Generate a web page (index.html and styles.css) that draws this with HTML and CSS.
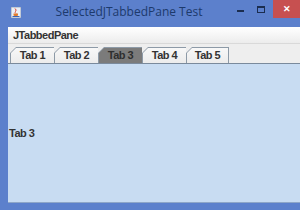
FILE: index.html
```html
<!DOCTYPE html>
<html lang="en">
<head>
    <meta charset="UTF-8">
    <title>SelectedJTabbedPane Test</title>
    <link rel="stylesheet" href="styles.css">
</head>
<body>
    <!-- 窗口外框 -->
    <div class="window">
        <!-- 标题栏 -->
        <div class="titlebar">
            <svg class="appicon" width="10" height="11" viewBox="0 0 10 11">
                <rect x="0" y="0" width="10" height="11" fill="#e9eef6" stroke="#9aa6b8" stroke-width="1"/>
                <path d="M4 1.5 Q6 3 4.5 4.5 Q3.5 5.5 5 6.5" fill="none" stroke="#e0442a" stroke-width="1"/>
                <path d="M2.5 6.5 H7 V8.5 Q4.8 10 2.5 8.5 Z" fill="#e07b2a"/>
                <path d="M1.5 9.5 H8.5" stroke="#3b63b5" stroke-width="1"/>
            </svg>
            <div class="title">SelectedJTabbedPane Test</div>
            <div class="controls">
                <span class="min"></span>
                <span class="max"></span>
                <span class="close">✕</span>
            </div>
        </div>
        <!-- 窗口内容 -->
        <div class="client">
            <div class="menubar">JTabbedPane</div>
            <ul class="tabs">
                <li class="tab"><span>Tab 1</span></li>
                <li class="tab"><span>Tab 2</span></li>
                <li class="tab active"><span>Tab 3</span></li>
                <li class="tab"><span>Tab 4</span></li>
                <li class="tab last"><span>Tab 5</span></li>
            </ul>
            <div class="panel">Tab 3</div>
        </div>
        <div class="bottom"></div>
    </div>
</body>
</html>
```

FILE: styles.css
```css
/* 整体 */
body{
    margin: 0;
    font-family: "Liberation Sans", Arial, sans-serif;
}
.window{
    width: 300px;
    height: 210px;
    background-color: #5c80cc;
    display: flex;
    flex-direction: column;
    overflow: hidden;
}
/* 标题栏 */
.titlebar{
    height: 27px;
    display: flex;
    align-items: flex-start;
}
.appicon{
    margin: 7px 0 0 11px;
}
.title{
    flex: 1;
    text-align: center;
    font-family: "Open Sans", "Noto Sans", sans-serif;
    font-size: 12px;
    color: #1d3a6c;
    line-height: 24px;
}
.controls{
    display: flex;
    align-items: flex-start;
    height: 18px;
}
.min{
    width: 7px;
    height: 2px;
    background-color: #1b2d4f;
    margin: 10px 13px 0 0;
}
.max{
    width: 6px;
    height: 4px;
    border: 1px solid #1b2d4f;
    border-top-width: 2px;
    margin: 6px 8px 0 0;
}
.close{
    width: 27px;
    height: 18px;
    background-color: #c75050;
    color: white;
    font-size: 9px;
    font-weight: bold;
    text-align: center;
    line-height: 18px;
}
/* 内容区 */
.client{
    flex: 1;
    margin-left: 8px;
    display: flex;
    flex-direction: column;
    background-color: #eeeeee;
}
.menubar{
    height: 16px;
    padding-left: 5px;
    font-size: 11px;
    font-weight: bold;
    letter-spacing: -0.5px;
    line-height: 16px;
    color: #333333;
    background: linear-gradient(#ffffff, #ececec);
    border-bottom: 1px solid #d9d9d9;
}
.tabs{
    list-style: none;
    margin: 0;
    padding: 3px 0 0 2px;
    height: 16px;
    display: flex;
    border-bottom: 1px solid #7a8a9c;
}
.tab{
    width: 44px;
    height: 16px;
    background-color: #8d9aa7;
    clip-path: polygon(0 6px, 6px 0, 100% 0, 100% 100%, 0 100%);
    padding: 1px 0 0 1px;
    box-sizing: border-box;
}
.tab span{
    display: block;
    height: 15px;
    background: linear-gradient(#f8f8f8, #ececec);
    clip-path: polygon(0 5px, 5px 0, 100% 0, 100% 100%, 0 100%);
    font-size: 11px;
    font-weight: bold;
    letter-spacing: -0.5px;
    line-height: 15px;
    color: #333333;
    text-align: center;
}
.tab.last{
    width: 43px;
    padding-right: 1px;
}
/* 选中的那个变灰 */
.tab.active span{
    background: #7b7b7b;
    color: #2e2e2e;
}
.panel{
    flex: 1;
    background-color: #c8dcf2;
    display: flex;
    align-items: center;
    padding-left: 1px;
    font-size: 11px;
    font-weight: bold;
    letter-spacing: -0.5px;
    color: #333333;
    border-bottom: 1px solid #8ea6c8;
}
.bottom{
    height: 7px;
}
```
